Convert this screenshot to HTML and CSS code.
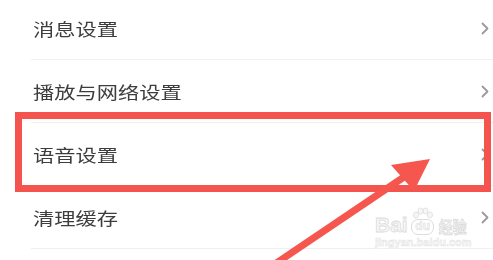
FILE: index.html
```html
<!DOCTYPE html>
<html lang="zh-CN">
<head>
<meta charset="utf-8">
<title>设置</title>
<link rel="stylesheet" href="styles.css">
</head>
<body>
<div class="page">
  <ul class="list">
    <li class="row"><div class="inner"><span class="label">消息设置</span><svg class="chev" viewBox="0 0 8 13"><polyline points="1.5,1.5 6.5,6.5 1.5,11.5"/></svg></div></li>
    <li class="row"><div class="inner"><span class="label">播放与网络设置</span><svg class="chev" viewBox="0 0 8 13"><polyline points="1.5,1.5 6.5,6.5 1.5,11.5"/></svg></div></li>
    <li class="row"><div class="inner"><span class="label">语音设置</span><svg class="chev" viewBox="0 0 8 13"><polyline points="1.5,1.5 6.5,6.5 1.5,11.5"/></svg></div></li>
    <li class="row"><div class="inner"><span class="label">清理缓存</span><svg class="chev" viewBox="0 0 8 13"><polyline points="1.5,1.5 6.5,6.5 1.5,11.5"/></svg></div></li>
  </ul>

  <div class="highlight"></div>

  <div class="watermark">
    <div class="wm-top">
      <span class="wm-bai">Bai</span>
      <span class="wm-paw">
        <svg class="paw" viewBox="0 0 24 12" width="24" height="12">
          <ellipse cx="5" cy="8" rx="2.5" ry="3"/>
          <ellipse cx="9.5" cy="4" rx="2.5" ry="3"/>
          <ellipse cx="14.5" cy="4" rx="2.5" ry="3"/>
          <ellipse cx="19" cy="8" rx="2.5" ry="3"/>
        </svg>
        <span class="wm-du">du</span>
      </span>
      <span class="wm-jy">经验</span>
    </div>
    <div class="wm-url">jingyan.baidu.com</div>
  </div>

  <svg class="arrow" viewBox="0 0 493 260" width="493" height="260">
    <line x1="272" y1="266" x2="404" y2="177" />
    <polygon points="430,159 391,165 414,191" />
  </svg>
</div>
</body>
</html>
```

FILE: styles.css
```css
html, body {
  margin: 0;
  padding: 0;
  background: #ffffff;
}

.page {
  position: relative;
  width: 493px;
  height: 260px;
  overflow: hidden;
  font-family: "Noto Sans CJK SC", "Noto Sans", sans-serif;
}

.list {
  list-style: none;
  margin: -3px 0 0 0;
  padding: 0;
}

.row {
  padding-left: 31px;
}

.inner {
  height: 62px;
  border-bottom: 1px solid #f0f0f0;
  display: flex;
  align-items: center;
  justify-content: space-between;
  padding-right: 4px;
}

.label {
  display: inline-block;
  font-size: 17px;
  color: #3d3d3d;
  transform: scaleX(1.25);
  transform-origin: left center;
  margin-left: 2px;
  filter: blur(0.3px);
}

.chev {
  width: 8px;
  height: 13px;
  fill: none;
  stroke: #9a9a9a;
  stroke-width: 1.8;
  stroke-linecap: round;
  stroke-linejoin: round;
}

.highlight {
  position: absolute;
  left: 15px;
  top: 112px;
  width: 462px;
  height: 66px;
  border: 7px solid #f5544e;
}

.arrow {
  position: absolute;
  left: 0;
  top: 0;
}

.arrow line {
  stroke: #f5574f;
  stroke-width: 7;
}

.arrow polygon {
  fill: #f5574f;
}

.watermark {
  position: absolute;
  left: 375px;
  top: 206px;
  white-space: nowrap;
  color: #f7f7f7;
  -webkit-text-stroke: 0.8px #dcdcdc;
}

.wm-top {
  display: flex;
  align-items: flex-end;
  height: 29px;
}

.wm-bai {
  font-family: "Liberation Sans", sans-serif;
  font-size: 21px;
  font-weight: bold;
  line-height: 21px;
}

.wm-paw {
  display: flex;
  flex-direction: column;
  align-items: center;
  width: 28px;
  margin: 0 2px 0 1px;
}

.paw {
  fill: #f7f7f7;
  stroke: #dcdcdc;
  stroke-width: 0.8;
}

.wm-du {
  font-family: "Liberation Sans", sans-serif;
  font-size: 12px;
  font-weight: bold;
  line-height: 13px;
  border: 1px solid #dcdcdc;
  border-radius: 7px;
  padding: 0 3px 1px;
  -webkit-text-stroke: 0.5px #dcdcdc;
}

.wm-jy {
  font-family: "Noto Sans CJK SC", sans-serif;
  font-size: 14px;
  font-weight: bold;
  line-height: 16px;
  transform: scaleY(1.1);
  transform-origin: bottom;
}

.wm-url {
  font-family: "Liberation Sans", sans-serif;
  font-size: 11px;
  font-weight: bold;
  line-height: 13px;
  margin-top: 1px;
  -webkit-text-stroke: 0.4px #e0e0e0;
}
```
